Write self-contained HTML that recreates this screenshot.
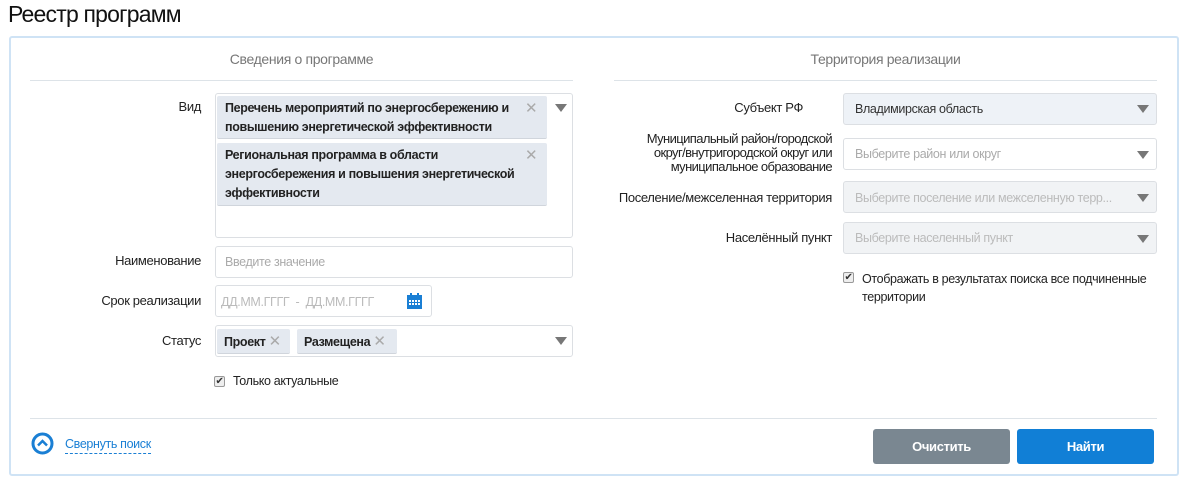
<!DOCTYPE html>
<html><head><meta charset="utf-8"><style>
*{box-sizing:border-box;margin:0;padding:0}
body{width:1193px;height:483px;background:#fff;font-family:"Liberation Sans",sans-serif;color:#222;position:relative;overflow:hidden;letter-spacing:-0.35px}
.a{position:absolute}
.t{font-size:23px;left:8px;top:1px;letter-spacing:-0.8px;color:#111}
.panel{left:9px;top:36px;width:1170px;height:440px;border:2px solid #cfe3f5;border-radius:3px}
.hd{font-size:14px;color:#777;text-align:center}
.line{height:1px;background:#dde3e8}
.lbl{font-size:13px;text-align:right;color:#222;line-height:14px}
.box{border:1px solid #dcdfe3;border-radius:3px;background:#fff}
.ph{font-size:12.5px;color:#aaa}
.tag{background:#e4e9f0;border-bottom:1px solid #d0d5dc;border-radius:2px;font-size:12.5px;font-weight:bold;color:#222;line-height:19px;padding:3px 8px}
.x{color:#aaa;font-weight:normal;font-size:15px}
.arr{width:0;height:0;border-left:6px solid transparent;border-right:6px solid transparent;border-top:8px solid #777}
.cb{width:11px;height:11px;border:1px solid #999;border-radius:2px;background:#eee;font-size:10px;line-height:9px;text-align:center;color:#333}
.sm{font-size:12.5px}
.btn{color:#fff;font-size:13px;font-weight:bold;text-align:center;line-height:35px;border-radius:3px}
</style></head><body>
<div class="a t">Реестр программ</div>
<div class="a panel"></div>
<div class="a hd" style="left:30px;width:543px;top:51px">Сведения о программе</div>
<div class="a line" style="left:30px;width:543px;top:80px"></div>
<div class="a hd" style="left:614px;width:543px;top:51px">Территория реализации</div>
<div class="a line" style="left:614px;width:543px;top:80px"></div>

<div class="a lbl" style="left:100px;width:101px;top:100px">Вид</div>
<div class="a box" style="left:215px;top:93px;width:358px;height:145px"></div>
<div class="a tag" style="left:217px;top:96px;width:330px;height:43px">Перечень мероприятий по энергосбережению и повышению энергетической эффективности</div>
<div class="a x" style="left:525px;top:99px">✕</div>
<div class="a tag" style="left:217px;top:143px;width:330px;height:63px;padding-right:30px">Региональная программа в области энергосбережения и повышения энергетической эффективности</div>
<div class="a x" style="left:525px;top:146px">✕</div>
<div class="a arr" style="left:555px;top:104px"></div>

<div class="a lbl" style="left:60px;width:141px;top:254px">Наименование</div>
<div class="a box" style="left:215px;top:246px;width:358px;height:32px"></div>
<div class="a ph" style="left:225px;top:255px">Введите значение</div>

<div class="a lbl" style="left:60px;width:141px;top:294px">Срок реализации</div>
<div class="a box" style="left:215px;top:285px;width:217px;height:32px"></div>
<div class="a ph" style="left:221px;top:295px;color:#bbb">ДД.ММ.ГГГГ &nbsp;- &nbsp;ДД.ММ.ГГГГ</div>
<svg class="a" style="left:407px;top:293px" width="15" height="16" viewBox="0 0 15 16"><rect x="0" y="2" width="15" height="14" fill="#1a7fd4"/><rect x="3" y="0" width="2" height="4" fill="#1a7fd4"/><rect x="10" y="0" width="2" height="4" fill="#1a7fd4"/><g fill="#fff"><rect x="2" y="7" width="2" height="2"/><rect x="5" y="7" width="2" height="2"/><rect x="8" y="7" width="2" height="2"/><rect x="11" y="7" width="2" height="2"/><rect x="2" y="10" width="2" height="2"/><rect x="5" y="10" width="2" height="2"/><rect x="8" y="10" width="2" height="2"/><rect x="11" y="10" width="2" height="2"/></g></svg>

<div class="a lbl" style="left:60px;width:141px;top:334px">Статус</div>
<div class="a box" style="left:215px;top:325px;width:358px;height:32px"></div>
<div class="a tag" style="left:217px;top:329px;width:73px;height:25px;padding:3px 7px">Проект <span class="x">✕</span></div>
<div class="a tag" style="left:297px;top:329px;width:100px;height:25px;padding:3px 7px">Размещена <span class="x">✕</span></div>
<div class="a arr" style="left:555px;top:337px"></div>

<div class="a cb" style="left:214px;top:376px">✔</div>
<div class="a sm" style="left:233px;top:374px">Только актуальные</div>

<div class="a lbl" style="left:620px;width:183px;top:101px">Субъект РФ</div>
<div class="a box" style="left:843px;top:93px;width:314px;height:32px;background:#eef2f7"></div>
<div class="a sm" style="left:855px;top:102px;color:#333">Владимирская область</div>
<div class="a arr" style="left:1137px;top:105px"></div>

<div class="a lbl" style="left:560px;width:272px;top:132px;letter-spacing:-0.6px">Муниципальный район/городской<br>округ/внутригородской округ или<br>муниципальное образование</div>
<div class="a box" style="left:843px;top:138px;width:314px;height:32px"></div>
<div class="a ph" style="left:855px;top:147px">Выберите район или округ</div>
<div class="a arr" style="left:1137px;top:151px"></div>

<div class="a lbl" style="left:560px;width:272px;top:191px">Поселение/межселенная территория</div>
<div class="a box" style="left:843px;top:181px;width:314px;height:32px;background:#f1f3f5"></div>
<div class="a ph" style="left:855px;top:191px;color:#bbb">Выберите поселение или межселенную терр...</div>
<div class="a arr" style="left:1137px;top:194px"></div>

<div class="a lbl" style="left:600px;width:232px;top:231px">Населённый пункт</div>
<div class="a box" style="left:843px;top:222px;width:314px;height:32px;background:#f1f3f5"></div>
<div class="a ph" style="left:855px;top:231px;color:#bbb">Выберите населенный пункт</div>
<div class="a arr" style="left:1137px;top:235px"></div>

<div class="a cb" style="left:843px;top:272px">✔</div>
<div class="a sm" style="left:862px;top:270px;width:300px;line-height:18px">Отображать в результатах поиска все подчиненные территории</div>

<div class="a line" style="left:30px;width:1127px;top:418px"></div>
<svg class="a" style="left:31px;top:432px" width="23" height="23" viewBox="0 0 23 23"><circle cx="11.5" cy="11.5" r="9.5" fill="none" stroke="#1a7fd4" stroke-width="3"/><path d="M7 13.5 L11.5 9 L16 13.5" fill="none" stroke="#1a7fd4" stroke-width="2.5"/></svg>
<div class="a sm" style="left:65px;top:437px;color:#1a7fd4;border-bottom:1px dashed #1a7fd4;padding-bottom:2px">Свернуть поиск</div>

<div class="a btn" style="left:873px;top:429px;width:137px;height:35px;background:#7a8791">Очистить</div>
<div class="a btn" style="left:1017px;top:429px;width:137px;height:35px;background:#117fd6">Найти</div>
</body></html>
